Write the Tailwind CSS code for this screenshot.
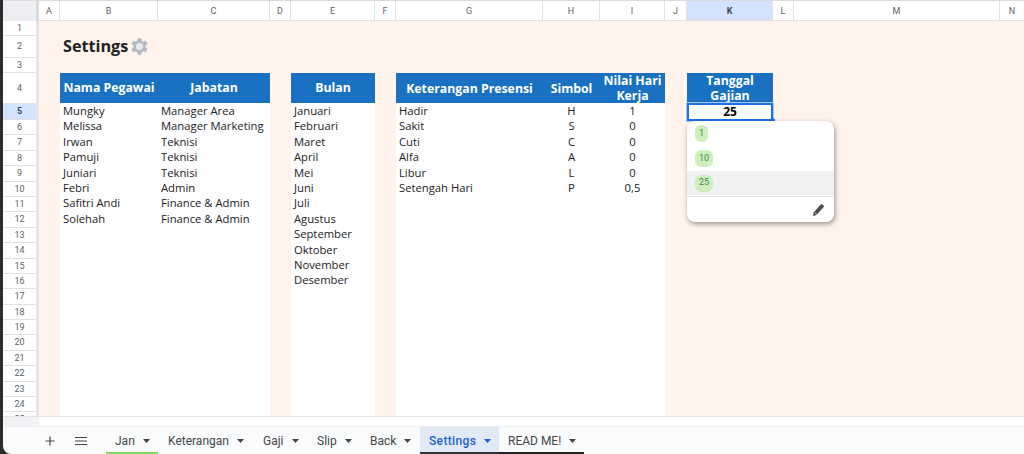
<!DOCTYPE html>
<html lang="en">
  <head>
    <meta charset="UTF-8" />
    <title>Settings</title>
    <script src="https://cdn.jsdelivr.net/npm/@tailwindcss/browser@4"></script>
  </head>
  <body class="bg-[#2b2b2b] overflow-hidden">
    <div class="relative w-[1024px] h-[454px] pl-[3px] flex flex-col font-['Open_Sans',sans-serif]">
      <!-- Column headers -->
      <div class="flex h-[21px] pt-px bg-[#d9dbde] font-['Roboto',sans-serif] text-[9px] text-[#5f6368] text-center leading-[20px]">
        <div class="w-[36px] bg-[#eceef1] border-r-[3px] border-[#d9dbde]"></div>
        <div class="w-[21px] bg-white border-r border-b border-[#dfe1e4]">A</div>
        <div class="w-[98px] bg-white border-r border-b border-[#dfe1e4]">B</div>
        <div class="w-[112px] bg-white border-r border-b border-[#dfe1e4]">C</div>
        <div class="w-[21px] bg-white border-r border-b border-[#dfe1e4]">D</div>
        <div class="w-[84px] bg-white border-r border-b border-[#dfe1e4]">E</div>
        <div class="w-[21px] bg-white border-r border-b border-[#dfe1e4]">F</div>
        <div class="w-[147px] bg-white border-r border-b border-[#dfe1e4]">G</div>
        <div class="w-[57px] bg-white border-r border-b border-[#dfe1e4]">H</div>
        <div class="w-[65px] bg-white border-r border-b border-[#dfe1e4]">I</div>
        <div class="w-[22px] bg-white border-r border-b border-[#dfe1e4]">J</div>
        <div class="w-[86px] bg-[#d3e3fd] border-r border-b border-[#dfe1e4] font-bold text-[#3a4658]">K</div>
        <div class="w-[21px] bg-white border-r border-b border-[#dfe1e4]">L</div>
        <div class="w-[206px] bg-white border-r border-b border-[#dfe1e4]">M</div>
        <div class="flex-1 bg-white border-b border-[#dfe1e4]">N</div>
      </div>

      <div class="flex h-[395px] shrink-0 overflow-hidden bg-white">
        <!-- Row headers -->
        <div class="w-[36px] shrink-0 border-r-[3px] border-[#e3e5e8] flex flex-col font-['Roboto',sans-serif] text-[9px] text-[#5f6368] text-center">
          <div class="h-[15px] shrink-0 leading-[14px] border-b border-[#dfe1e4]">1</div>
          <div class="h-[22px] shrink-0 leading-[21px] border-b border-[#dfe1e4]">2</div>
          <div class="h-[15px] shrink-0 leading-[14px] border-b border-[#dfe1e4]">3</div>
          <div class="h-[31px] shrink-0 leading-[30px] border-b border-[#dfe1e4]">4</div>
          <div class="h-[16px] shrink-0 leading-[15px] border-b border-[#dfe1e4] bg-[#d3e3fd] font-bold text-[#3a4658]">5</div>
          <div class="h-[15.4px] shrink-0 leading-[14px] border-b border-[#dfe1e4]">6</div>
          <div class="h-[15.4px] shrink-0 leading-[14px] border-b border-[#dfe1e4]">7</div>
          <div class="h-[15.4px] shrink-0 leading-[14px] border-b border-[#dfe1e4]">8</div>
          <div class="h-[15.4px] shrink-0 leading-[14px] border-b border-[#dfe1e4]">9</div>
          <div class="h-[15.4px] shrink-0 leading-[14px] border-b border-[#dfe1e4]">10</div>
          <div class="h-[15.4px] shrink-0 leading-[14px] border-b border-[#dfe1e4]">11</div>
          <div class="h-[15.4px] shrink-0 leading-[14px] border-b border-[#dfe1e4]">12</div>
          <div class="h-[15.4px] shrink-0 leading-[14px] border-b border-[#dfe1e4]">13</div>
          <div class="h-[15.4px] shrink-0 leading-[14px] border-b border-[#dfe1e4]">14</div>
          <div class="h-[15.4px] shrink-0 leading-[14px] border-b border-[#dfe1e4]">15</div>
          <div class="h-[15.4px] shrink-0 leading-[14px] border-b border-[#dfe1e4]">16</div>
          <div class="h-[15.4px] shrink-0 leading-[14px] border-b border-[#dfe1e4]">17</div>
          <div class="h-[15.4px] shrink-0 leading-[14px] border-b border-[#dfe1e4]">18</div>
          <div class="h-[15.4px] shrink-0 leading-[14px] border-b border-[#dfe1e4]">19</div>
          <div class="h-[15.4px] shrink-0 leading-[14px] border-b border-[#dfe1e4]">20</div>
          <div class="h-[15.4px] shrink-0 leading-[14px] border-b border-[#dfe1e4]">21</div>
          <div class="h-[15.4px] shrink-0 leading-[14px] border-b border-[#dfe1e4]">22</div>
          <div class="h-[15.4px] shrink-0 leading-[14px] border-b border-[#dfe1e4]">23</div>
          <div class="h-[15.4px] shrink-0 leading-[14px] border-b border-[#dfe1e4]">24</div>
          <div class="h-[15.4px] shrink-0 leading-[14px]">25</div>
        </div>

        <!-- Sheet -->
        <div class="flex-1 bg-[#fff3eb] flex flex-col text-[11.25px] text-[#222]">
          <div class="h-[52px] shrink-0 pl-[24px] pt-[14px] flex items-start gap-[3px]">
            <span class="text-[16.2px] leading-[22px] font-bold text-[#222]">Settings</span>
            <svg class="mt-[3px]" width="17" height="17" viewBox="4 3 18 18"><path fill="#b2bac4" fill-rule="evenodd" d="M19.4 13a7.500 7.500 0 0 0 0-2l2.100-1.600-2-3.500-2.500 1a7.600 7.600 0 0 0-1.700-1L15 3.300h-4l-.4 2.600a7.600 7.600 0 0 0-1.700 1l-2.500-1-2 3.500L6.500 11a7.500 7.500 0 0 0 0 2l-2.100 1.600 2 3.500 2.500-1a7.600 7.600 0 0 0 1.700 1l.4 2.600h4l.4-2.600a7.600 7.600 0 0 0 1.700-1l2.500 1 2-3.500zM13 15.500a3.500 3.500 0 1 1 0-7 3.500 3.500 0 0 1 0 7z"/><circle cx="13" cy="12" r="3.500" fill="#e4e9ef"/></svg>
          </div>
          <div class="flex flex-1 pl-[21px]">
            <!-- Pegawai -->
            <div class="w-[210px] flex flex-col bg-white">
              <div class="h-[30px] flex items-center bg-[#1a71c2] text-white font-bold text-[12.3px]">
                <div class="w-[98px] text-center">Nama Pegawai</div>
                <div class="flex-1 text-center">Jabatan</div>
              </div>
              <div class="flex leading-[15.4px]">
                <div class="w-[98px] pl-[3px]">
                  <div>Mungky</div><div>Melissa</div><div>Irwan</div><div>Pamuji</div><div>Juniari</div><div>Febri</div><div>Safitri Andi</div><div>Solehah</div>
                </div>
                <div class="flex-1 pl-[3px]">
                  <div>Manager Area</div><div>Manager Marketing</div><div>Teknisi</div><div>Teknisi</div><div>Teknisi</div><div>Admin</div><div>Finance &amp; Admin</div><div>Finance &amp; Admin</div>
                </div>
              </div>
            </div>
            <!-- Bulan -->
            <div class="w-[84px] ml-[21px] flex flex-col bg-white">
              <div class="h-[30px] flex items-center justify-center bg-[#1a71c2] text-white font-bold text-[12.3px]">Bulan</div>
              <div class="pl-[3px] leading-[15.4px]">
                <div>Januari</div><div>Februari</div><div>Maret</div><div>April</div><div>Mei</div><div>Juni</div><div>Juli</div><div>Agustus</div><div>September</div><div>Oktober</div><div>November</div><div>Desember</div>
              </div>
            </div>
            <!-- Presensi -->
            <div class="w-[269px] ml-[21px] flex flex-col bg-white">
              <div class="h-[30px] flex items-center bg-[#1a71c2] text-white font-bold text-[12.3px] text-center leading-[15px]">
                <div class="w-[147px]">Keterangan Presensi</div>
                <div class="w-[57px]">Simbol</div>
                <div class="flex-1">Nilai Hari Kerja</div>
              </div>
              <div class="flex leading-[15.4px]">
                <div class="w-[147px] pl-[3px]">
                  <div>Hadir</div><div>Sakit</div><div>Cuti</div><div>Alfa</div><div>Libur</div><div>Setengah Hari</div>
                </div>
                <div class="w-[57px] text-center">
                  <div>H</div><div>S</div><div>C</div><div>A</div><div>L</div><div>P</div>
                </div>
                <div class="flex-1 text-center">
                  <div>1</div><div>0</div><div>0</div><div>0</div><div>0</div><div>0,5</div>
                </div>
              </div>
            </div>
            <!-- Tanggal -->
            <div class="w-[86px] ml-[22px] flex flex-col">
              <div class="h-[30px] flex items-center bg-[#1a71c2] text-white font-bold text-[12.3px] text-center leading-[15px]">Tanggal Gajian</div>
              <div class="relative h-[18px] bg-white border-2 border-[#1a73e8] outline outline-[#a8c7fa] text-center font-bold text-[12px] leading-[14px] text-black">
                25
                <div class="absolute -right-[4px] -bottom-[4px] w-[5px] h-[5px] rounded-full bg-[#1a73e8]"></div>
              </div>
            </div>
          </div>
        </div>
      </div>

      <!-- Empty strip under the grid -->
      <div class="flex h-[10px] shrink-0 border-t border-[#e1e3e6] bg-white">
        <div class="w-[36px] bg-[#f1f2f3]"></div>
      </div>

      <!-- Sheet tabs -->
      <div class="flex-1 flex items-stretch bg-[#f9fbfd] border-t border-[#eceef1] rounded-bl-lg font-['Roboto',sans-serif] text-[12px] text-[#444746]">
        <div class="w-[103px] flex items-center pt-px">
          <svg class="ml-[41px]" width="12" height="12" viewBox="0 0 12 12"><path d="M6 1.500v9M1.500 6h9" stroke="#444746" stroke-width="1.200" fill="none"/></svg>
          <svg class="ml-[18px]" width="14" height="12" viewBox="0 0 14 12"><path d="M1 2.500h12M1 6h12M1 9.500h12" stroke="#444746" stroke-width="1.200" fill="none"/></svg>
        </div>
        <div class="w-[52px] flex items-center gap-[8px] pl-[9px] pt-[2px] border-b-2 border-[#7fdc55]">Jan<svg width="7" height="4" viewBox="0 0 7 4"><path d="M0 0h7L3.500 4z" fill="#444746"/></svg></div>
        <div class="w-[95px] flex items-center gap-[8px] pl-[10px] pt-px">Keterangan<svg width="7" height="4" viewBox="0 0 7 4"><path d="M0 0h7L3.500 4z" fill="#444746"/></svg></div>
        <div class="w-[54px] flex items-center gap-[8px] pl-[10px] pt-px">Gaji<svg width="7" height="4" viewBox="0 0 7 4"><path d="M0 0h7L3.500 4z" fill="#444746"/></svg></div>
        <div class="w-[53px] flex items-center gap-[8px] pl-[10px] pt-px">Slip<svg width="7" height="4" viewBox="0 0 7 4"><path d="M0 0h7L3.500 4z" fill="#444746"/></svg></div>
        <div class="w-[60px] flex items-center gap-[8px] pl-[10px] pt-px">Back<svg width="7" height="4" viewBox="0 0 7 4"><path d="M0 0h7L3.500 4z" fill="#444746"/></svg></div>
        <div class="w-[79px] flex items-center gap-[8px] pl-[9px] pt-[2px] bg-[#e1e9f7] border-b-2 border-[#333] text-[#1a62d0] font-medium tracking-[0.35px]">Settings<svg width="7" height="4" viewBox="0 0 7 4"><path d="M0 0h7L3.500 4z" fill="#1a62d0"/></svg></div>
        <div class="w-[85px] flex items-center gap-[8px] pl-[9px] pt-[2px] border-b-2 border-[#222]">READ ME!<svg width="7" height="4" viewBox="0 0 7 4"><path d="M0 0h7L3.500 4z" fill="#444746"/></svg></div>
      </div>

      <!-- Dropdown menu -->
      <div class="absolute left-[687px] top-[121px] w-[147px] h-[101px] bg-white rounded-lg shadow-[1px_2px_5px_rgba(0,0,0,0.4)] flex flex-col overflow-hidden font-['Roboto',sans-serif] text-[9px] text-[#3a8a4c]">
        <div class="h-[25px] shrink-0 pl-[8px] flex items-center"><span class="w-[13px] h-[17px] rounded-[6px] bg-[#cfeebd] flex items-center justify-center">1</span></div>
        <div class="h-[25px] shrink-0 pl-[8px] flex items-center"><span class="w-[18px] h-[17px] rounded-[6px] bg-[#cfeebd] flex items-center justify-center">10</span></div>
        <div class="h-[24px] shrink-0 pl-[8px] flex items-center bg-[#f0f2f3]"><span class="w-[18px] h-[17px] rounded-[6px] bg-[#cfeebd] flex items-center justify-center">25</span></div>
        <div class="flex-1 border-t border-[#e1e3e6] mt-px flex items-center justify-end pr-[9px]">
          <svg width="13" height="14" viewBox="0 0 13 14"><path fill="#4a4d50" d="M1 13l.6-3.600L8.800 1.400a1 1 0 0 1 1.400 0l1.500 1.300a1 1 0 0 1 0 1.400L4.500 12z"/><path d="M2.800 9.700l2 1.800" stroke="#fff" stroke-width=".7"/></svg>
        </div>
      </div>
    </div>
  </body>
</html>
